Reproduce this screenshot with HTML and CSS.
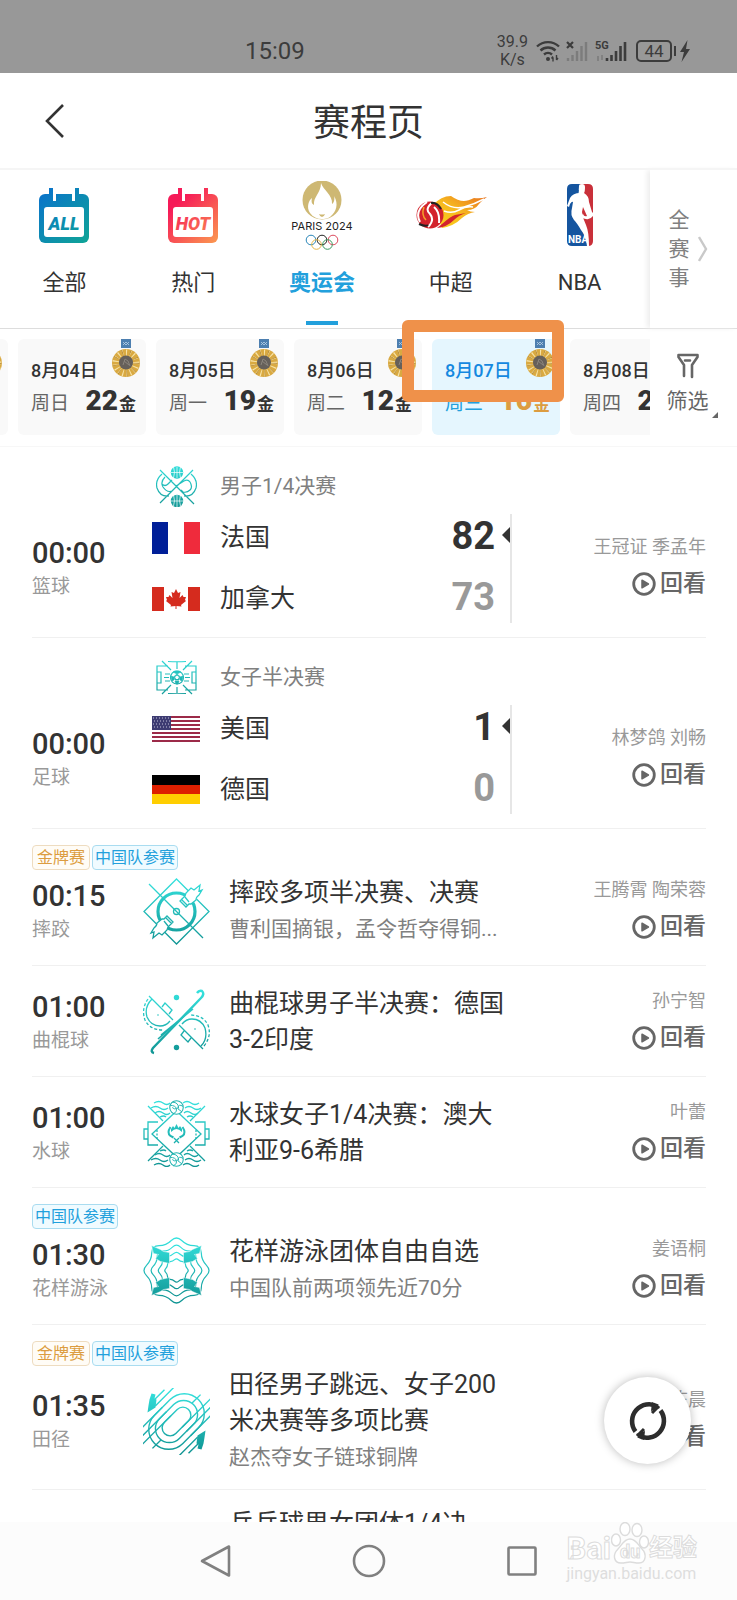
FILE: index.html
```html
<!DOCTYPE html>
<html lang="zh-CN">
<head>
<meta charset="utf-8">
<meta name="viewport" content="width=device-width, initial-scale=1">
<title>赛程页</title>
<link rel="stylesheet" href="styles.css">
</head>
<body>
<svg class="defs" aria-hidden="true">
  <defs>
    <linearGradient id="teal" gradientUnits="userSpaceOnUse" x1="0" y1="0" x2="0" y2="67"><stop offset="0" stop-color="#35e3df"/><stop offset="1" stop-color="#0f9392"/></linearGradient>
    <linearGradient id="teal-c" gradientUnits="userSpaceOnUse" x1="0" y1="-33" x2="0" y2="33"><stop offset="0" stop-color="#35e3df"/><stop offset="1" stop-color="#0f9392"/></linearGradient>
    <linearGradient id="teal-r" gradientUnits="userSpaceOnUse" x1="23" y1="-23" x2="-23" y2="23"><stop offset="0" stop-color="#35e3df"/><stop offset="1" stop-color="#0f9392"/></linearGradient>
    <linearGradient id="teal-s" gradientUnits="userSpaceOnUse" x1="0" y1="0" x2="0" y2="41"><stop offset="0" stop-color="#2fdedb"/><stop offset="1" stop-color="#159896"/></linearGradient>
    <linearGradient id="all" gradientUnits="userSpaceOnUse" x1="1" y1="10" x2="51" y2="62"><stop offset="0" stop-color="#0a72cc"/><stop offset="1" stop-color="#0fa596"/></linearGradient>
    <linearGradient id="hot" gradientUnits="userSpaceOnUse" x1="1" y1="10" x2="51" y2="62"><stop offset="0.2" stop-color="#f61a58"/><stop offset="1" stop-color="#fb9a50"/></linearGradient>
    <linearGradient id="fire" x1="0" y1="1" x2="1" y2="0"><stop offset="0" stop-color="#fbd31c"/><stop offset="0.5" stop-color="#f6b81f"/><stop offset="1" stop-color="#e8701f"/></linearGradient>
    <symbol id="medal" viewBox="0 0 28 38">
      <path d="M9 0h10v9H9z" fill="#4d7fb0"/><path d="M11 3l3 3 3-3M11 6l3-3 3 3" stroke="#b9d0e6" fill="none" stroke-width=".8"/>
      <circle cx="14" cy="24" r="14" fill="#d9a941"/>
      <circle cx="14" cy="24" r="10" fill="none" stroke="#f7e3a8" stroke-width="7" stroke-dasharray="1 2.6"/>
      <circle cx="14" cy="24" r="10" fill="none" stroke="#a97a25" stroke-width="7" stroke-dasharray=".6 6.6"/>
      <circle cx="14" cy="23.500" r="7" fill="#66605a"/><path d="M11 26l2-6 3 2 2 5M12 22l5 4" stroke="#8b857d" fill="none"/>
    </symbol>
    <symbol id="play" viewBox="0 0 24 24">
      <circle cx="12" cy="12" r="10.300" fill="none" stroke="#666" stroke-width="2.800"/><path d="M10 8.200l6.400 3.800-6.400 3.800z" fill="#666" stroke="#666" stroke-width="1.500" stroke-linejoin="round"/>
    </symbol>
    <symbol id="ball" viewBox="0 0 14 14">
      <circle cx="7" cy="7" r="6.300" fill="#fff" stroke="#22b5b2" stroke-width="1"/>
      <path d="M1 5q5 0 6 3t-3 5M3 2q6 0 6 6M13 6q-4-3-5 2M8 8l4 3M7 8q-2 1-4-1" fill="none" stroke="#22b5b2" stroke-width=".9"/>
    </symbol>
  </defs>
</svg>
<div class="screen">
  <div class="status">
    <span class="clock">15:09</span>
    <div class="status-right">
      <span class="speed">39.9<br>K/s</span>
      <svg width="92" height="24" viewBox="0 0 92 24" fill="none" stroke="#3c3c3c">
        <path d="M1 7.500a16 16 0 0 1 22 0M4.500 11.500a11 11 0 0 1 15 0M8 15.500a6 6 0 0 1 8 0" stroke-width="2.400"/>
        <circle cx="12" cy="20" r="2" fill="#3c3c3c" stroke="none"/>
        <path d="M17 18.500v4M20.500 16v5M15.500 19.500l1.500-2M22 19l-1.500 2" stroke-width="1.400"/>
        <path d="M31 3l6 6M37 3l-6 6" stroke-width="2.200"/>
        <path d="M32 22v-3M36.500 22v-6M41 22v-10M45.500 22V7M50 22V3" stroke="#7c7c7c" stroke-width="2.400"/>
        <path d="M62 17v5M66 16v5" stroke="#7c7c7c" stroke-width="1.600"/>
        <path d="M71 22v-3M75.500 22v-6M80 22v-10M84.500 22V7M89 22V3" stroke-width="2.600"/>
        <text x="59" y="10" class="net">5G</text>
      </svg>
      <span class="battery">44</span>
      <svg width="10" height="22" viewBox="0 0 10 22"><path d="M7.500 0L0 12h4L1.500 22 10 9H6z" fill="#3c3c3c"/></svg>
    </div>
  </div>

  <header class="bar">
    <button class="back" aria-label="返回"><svg width="20" height="34" viewBox="0 0 20 34"><path d="M18 1L2 17l16 16" fill="none" stroke="#333" stroke-width="2.600"/></svg></button>
    <h1>赛程页</h1>
  </header>

  <nav class="tabs">
    <div class="tab-list">
      <a class="tab" href="#all">
        <svg width="52" height="70" viewBox="0 0 52 70"><rect x="1" y="13" width="50" height="49" rx="6" fill="url(#all)"/><path d="M15 12h3v8h-3zM34 12h3v8h-3z" fill="#fff"/><path d="M11 7h4v12h-4zM37 7h4v12h-4z" fill="url(#all)"/><rect x="6" y="26" width="40" height="30" rx="3" fill="#fff"/><text x="26" y="49" class="cal-text" fill="url(#all)">ALL</text></svg>
        <span>全部</span>
      </a>
      <a class="tab" href="#hot">
        <svg width="52" height="70" viewBox="0 0 52 70"><rect x="1" y="13" width="50" height="49" rx="6" fill="url(#hot)"/><path d="M15 12h3v8h-3zM34 12h3v8h-3z" fill="#fff"/><path d="M11 7h4v12h-4zM37 7h4v12h-4z" fill="url(#hot)"/><rect x="6" y="26" width="40" height="30" rx="3" fill="#fff"/><text x="26" y="49" class="cal-text" fill="url(#hot)">HOT</text></svg>
        <span>热门</span>
      </a>
      <a class="tab active" href="#olympics">
        <svg width="64" height="70" viewBox="0 0 64 70">
          <circle cx="32" cy="19" r="19.500" fill="#ceb873"/>
          <path d="M31 2c2 7 12 12 11 21 2-1 3-5 2-8 5 8 2 16-3 20-2 2-4 3-9 3s-9-2-12-6c-4-6-1-13 2-15-1 4 0 6 2 7-1-8 7-12 7-22z" fill="#fff"/>
          <path d="M29 33q3 1 6 0-1 3-3 3t-3-3z" fill="#ceb873"/>
          <text x="32" y="49" class="paris">PARIS 2024</text>
          <g fill="none" stroke-width="1"><circle cx="21" cy="59" r="4.800" stroke="#2a86b8"/><circle cx="32" cy="59" r="4.800" stroke="#222"/><circle cx="43" cy="59" r="4.800" stroke="#dc4a5e"/><circle cx="26.500" cy="63.500" r="4.800" stroke="#e6b648"/><circle cx="37.500" cy="63.500" r="4.800" stroke="#3a9a5e"/></g>
        </svg>
        <span>奥运会</span>
      </a>
      <a class="tab" href="#csl">
        <svg width="72" height="70" viewBox="0 0 72 70">
          <path d="M18 24q8-9 18-9 7 5 13 5 4 0 10-3 6 1 13-1-5 3-8 7-4 6-12 6 3 2 8 2-7 1-13 6-8 8-20 10z" fill="url(#fire)"/>
          <path d="M28 21q10 8 21 5t20-8M29 30q8 3 15-1t14-3" fill="none" stroke="#fff" stroke-width="1.500"/>
          <path d="M27 43q9-8 13-9l11-2q-7 2-12 7-7 7-17 8z" fill="#d3232c"/>
          <ellipse cx="15" cy="34" rx="13.500" ry="13.500" fill="#d3232c"/>
          <path d="M12 21Q-1 30 5 41M18 21q-9 7-3 12 5 6-2 13M19 26q6 5 5 16" fill="none" stroke="#fff" stroke-width="2"/>
          <path d="M16 22q6-1 10 6M4 43q7 3 9 1" fill="none" stroke="#222" stroke-width="2"/>
          <path d="M9 26q-3 8 2 13" fill="none" stroke="#f4a12a" stroke-width="1.500"/>
        </svg>
        <span>中超</span>
      </a>
      <a class="tab" href="#nba">
        <svg width="28" height="70" viewBox="0 0 28 70">
          <path d="M14 3h8q5 0 5 5v52q0 5-5 5h-8z" fill="#c9303a"/><path d="M14 3H6Q1 3 1 8v52q0 5 5 5h17L9 34z" fill="#15559f"/>
          <path d="M13 5q0-2 3-2t3 3q0 5-1 6 5 3 5 9l3 10q2 1 1 4-3 4-7 3-3 0-4-3l1-2q1 3 4 2l-4-9-1 5q1 7 4 13 3 7 3 21h-2q-1-10-6-16-4-7-7-10-4-5-2-12l1-6q-1-1-3 2L3 26l-2-1 3-8q3-5 10-5-2-3-1-7z" fill="#fff"/>
          <text x="2" y="62" class="nba-text">NBA</text>
        </svg>
        <span>NBA</span>
      </a>
    </div>
    <button class="all-events"><span>全赛事</span><svg width="10" height="26" viewBox="0 0 10 26"><path d="M1 1l7 12-7 12" fill="none" stroke="#c9c9c9" stroke-width="2.400"/></svg></button>
  </nav>

  <div class="dates">
    <div class="date-strip">
      <button class="date"><b>8月03日</b><span class="line"><i>周六</i><span class="gold"><strong>15</strong>金</span></span><svg class="medal"><use href="#medal"/></svg></button>
      <button class="date"><b>8月04日</b><span class="line"><i>周日</i><span class="gold"><strong>22</strong>金</span></span><svg class="medal"><use href="#medal"/></svg></button>
      <button class="date"><b>8月05日</b><span class="line"><i>周一</i><span class="gold"><strong>19</strong>金</span></span><svg class="medal"><use href="#medal"/></svg></button>
      <button class="date"><b>8月06日</b><span class="line"><i>周二</i><span class="gold"><strong>12</strong>金</span></span><svg class="medal"><use href="#medal"/></svg></button>
      <button class="date selected"><b>8月07日</b><span class="line"><i>周三</i><span class="gold"><strong>16</strong>金</span></span><svg class="medal"><use href="#medal"/></svg></button>
      <button class="date"><b>8月08日</b><span class="line"><i>周四</i><span class="gold"><strong>21</strong>金</span></span></button>
    </div>
    <button class="filter">
      <svg width="22" height="26" viewBox="0 0 22 26" fill="none" stroke="#666" stroke-width="2.600" stroke-linecap="round" stroke-linejoin="round"><path d="M7 23V12L1.500 4V2h19v2L15 12v12M8 7.500h5"/></svg>
      <span>筛选</span>
    </button>
    <div class="callout"></div>
  </div>

  <main class="schedule">
    <section class="event match">
      <div class="stage"><svg width="41" height="41" viewBox="0 0 41 41" fill="none" stroke="url(#teal-s)" stroke-width="1.200">
        <path d="M4 4l34 34M37 4L4 37M6 8Q-1 14 1 22q3 9 12 8M16 14l-4 4q-3 3-6 0M35 8q7 6 5 14-3 9-12 8M9 11q-5 5-2 10 4 6 9 4l5-5M20 20l8-5q4-2 6 1 3 5 0 8t-7 2l-2-2"/>
        <g fill="url(#teal-s)" stroke="none"><circle cx="21" cy="6.500" r="6.200"/><circle cx="21" cy="35" r="6.200"/></g>
        <path d="M15 6.500h12M21 1v11M17.500 1q2 5 0 11M24.500 1q-2 5 0 11M15 35h12M21 29v12M17.500 29q2 6 0 11M24.500 29q-2 6 0 11" stroke="#fff" stroke-width=".7"/>
      </svg><span>男子1/4决赛</span></div>
      <div class="body">
        <div class="when"><time>00:00</time><span>篮球</span></div>
        <div class="teams">
          <div class="team"><svg width="48" height="32" viewBox="0 0 48 32"><path d="M0 0h16v32H0z" fill="#001f98"/><path d="M16 0h16v32H16z" fill="#fff"/><path d="M32 0h16v32H32z" fill="#ef2b3c"/></svg><span>法国</span><strong class="win">82</strong></div>
          <div class="team"><svg width="48" height="24" viewBox="0 0 48 24"><path d="M0 0h48v24H0z" fill="#fff"/><path d="M0 0h12v24H0zM36 0h12v24H36z" fill="#d52b1e"/><path d="M24 2l2 4 2.500-1-1 6 3-3 1 2 2.500 0-1 3 1 1-5 4 .5 1.500-5-.5V22h-1v-3l-5 .500.500-1.500-5-4 1-1-1-3h2.500l1-2 3 3-1-6L22 6z" fill="#d52b1e"/></svg><span>加拿大</span><strong>73</strong></div>
        </div>
        <div class="watch"><span>王冠证 季孟年</span><a href="#replay"><svg><use href="#play"/></svg>回看</a></div>
      </div>
    </section>

    <section class="event match">
      <div class="stage"><svg width="41" height="41" viewBox="0 0 41 41" fill="none" stroke="url(#teal-s)" stroke-width="1.200">
        <path d="M12 9H1v24h11M29 9h11v24H29M1 15h4v11H1M40 15h-4v11h4M12 4.500q9 .5 18 0M12 36.500q9-.5 18 0M6 4l9 9M36 4l-9 9M6 37l9-9M36 37l-9-9M21 5v7M21 30v6M9 17h5M8 20.500h5M9 24h5M28 17h5M29 20.500h5M28 24h5"/>
        <circle cx="21" cy="20.500" r="6.500"/><path d="M21 17l3 2.500-1 3.500h-4l-1-3.500zM17 15l2-1h4l2 1-4 2zM15 19l1 5 2-1 0-3zM27 19l-1 5-2-1 0-3zM19 24h4l-1 3h-2z" fill="url(#teal-s)" stroke-width=".6"/><path d="M21 18.500l2 1.500-1 2h-2l-1-2z" fill="#fff" stroke="none"/>
      </svg><span>女子半决赛</span></div>
      <div class="body">
        <div class="when"><time>00:00</time><span>足球</span></div>
        <div class="teams">
          <div class="team"><svg width="48" height="26" viewBox="0 0 48 26"><path d="M0 0h48v26H0z" fill="#fff"/><path d="M0 1h48M0 5h48M0 9h48M0 13h48M0 17h48M0 21h48M0 25h48" stroke="#9c2a48" stroke-width="2"/><path d="M0 0h19v14H0z" fill="#3d3b72"/><path d="M1 2h18M2 5h17M1 8h18M2 11h17" stroke="#c5c4da" stroke-width="1" stroke-dasharray="1 2"/></svg><span>美国</span><strong class="win">1</strong></div>
          <div class="team"><svg width="48" height="29" viewBox="0 0 48 29"><path d="M0 0h48v10H0z"/><path d="M0 10h48v10H0z" fill="#dd1f00"/><path d="M0 19h48v10H0z" fill="#ffce00"/></svg><span>德国</span><strong>0</strong></div>
        </div>
        <div class="watch"><span>林梦鸽 刘畅</span><a href="#replay"><svg><use href="#play"/></svg>回看</a></div>
      </div>
    </section>

    <section class="event">
      <div class="badges"><span class="badge final">金牌赛</span><span class="badge china">中国队参赛</span></div>
      <div class="body">
        <div class="when"><time>00:15</time><span>摔跤</span></div>
        <svg class="sport" viewBox="0 0 67 67" fill="none" stroke="url(#teal)" stroke-width="1.300">
          <path d="M33.500 1L66 33.500 33.500 66 1 33.500z"/>
          <circle cx="33.500" cy="33.500" r="18.500" stroke-width="3.200"/><circle cx="33.500" cy="33.500" r="3"/><path d="M6 6l54 54"/>
          <path fill="#fff" d="M37 23l6 6 3-3 2 0 5-4q0-3 3-5l3-5-3 1 1-6-6 5-3-2-5 5-1 3zM38 21l6 6M42 19l4 5"/>
          <path fill="#fff" d="M30 44l-6-6-3 3-2 0-5 4q0 3-3 5l-3 5 3-1-1 6 6-5 3 2 5-5 1-3zM29 46l-6-6M25 48l-4-5"/>
        </svg>
        <div class="info"><h2>摔跤多项半决赛、决赛</h2><p>曹利国摘银，孟令哲夺得铜...</p></div>
        <div class="watch"><span>王腾霄 陶荣蓉</span><a href="#replay"><svg><use href="#play"/></svg>回看</a></div>
      </div>
    </section>

    <section class="event">
      <div class="body">
        <div class="when"><time>01:00</time><span>曲棍球</span></div>
        <svg class="sport" viewBox="0 0 67 67" fill="none" stroke="url(#teal)" stroke-width="1.300">
          <path d="M6 7l24 24M36 36l24 24M19 18l3-4 7 7-3 4M48 49l-3 4-7-7 3-4"/>
          <path d="M9 10Q1 18 4 28q4 9 13 9 6 0 10-5M58 57q7-7 4-18-4-9-13-9-6 0-10 5"/>
          <path d="M5 10Q-2 20 2 31q5 10 18 10M61 57q8-10 4-21-5-10-18-10" stroke-dasharray="3 2"/>
          <path d="M54 4q2-3 5-2 3 3-1 7L10 59q-3 4 1 5" stroke-width="2.400"/><path d="M49 20L15 50M18 46l32-26" stroke-width="1.600"/>
          <g fill="url(#teal)" stroke="none"><circle cx="33.500" cy="8.500" r="2.700"/><circle cx="33.500" cy="58.500" r="2.700"/><circle cx="15" cy="26" r=".8"/><circle cx="52" cy="40" r=".8"/></g>
        </svg>
        <div class="info"><h2>曲棍球男子半决赛：德国3-2印度</h2></div>
        <div class="watch"><span>孙宁智</span><a href="#replay"><svg><use href="#play"/></svg>回看</a></div>
      </div>
    </section>

    <section class="event">
      <div class="body">
        <div class="when"><time>01:00</time><span>水球</span></div>
        <svg class="sport" viewBox="0 0 67 67" fill="none" stroke="url(#teal)" stroke-width="1.300">
          <path d="M33.500 11L58 34 33.500 57 9 34zM5 6l15 15M62 6L47 21M5 61l15-15M62 61L47 46"/>
          <path d="M15 22H5v23h10M5 29H1v10h4M52 22h10v23H52M62 29h4v10h-4"/>
          <path d="M14 30v9M53 30v9" stroke-dasharray="2 1.500"/>
          <path d="M11 3q5-3 9 0t7 0M40 3q4-3 8 0t8 0M8 8q5-3 9 0t8 0M42 8q4-3 8 0t8 0M12 13q4-3 8 0t7 0M41 13q3-3 7 0t7 0M17 17q4-2 6 0M44 17q3-2 6 0"/>
          <path d="M11 65q5-3 9 0t7 0M40 65q4-3 8 0t8 0M8 60q5-3 9 0t8 0M42 60q4-3 8 0t8 0M12 55q4-3 8 0t7 0M41 55q3-3 7 0t7 0M17 51q4-2 6 0M44 51q3-2 6 0"/>
          <use href="#ball" x="26" y="0" width="15" height="15"/><use href="#ball" x="26" y="52" width="15" height="15"/>
          <path d="M28 29l2-3 1.500 2 2-4 2 4 1.500-2 2 3v3q-3-3-5.500-3T28 32z" fill="url(#teal)" stroke="none"/><path d="M27.500 27q-4 6 0 9l3 1.500M39.500 27q4 6 0 9l-3 1.500" stroke-width="2"/><path d="M31 38l5 5M36 38l-5 5"/>
        </svg>
        <div class="info"><h2>水球女子1/4决赛：澳大利亚9-6希腊</h2></div>
        <div class="watch"><span>叶蕾</span><a href="#replay"><svg><use href="#play"/></svg>回看</a></div>
      </div>
    </section>

    <section class="event">
      <div class="badges"><span class="badge china">中国队参赛</span></div>
      <div class="body">
        <div class="when"><time>01:30</time><span>花样游泳</span></div>
        <svg class="sport" viewBox="-33.5 -33.5 67 67" fill="none" stroke="url(#teal-c)" stroke-width="1.200">
          <defs><path id="wave" vector-effect="non-scaling-stroke" d="M30-5.200Q35 0 30 5.200 24.900 10.300 24.800 17.500 24.700 24.700 17.500 24.800 10.300 24.900 5.200 30 0 35-5.200 30-10.300 24.900-17.500 24.800-24.700 24.700-24.800 17.500-24.900 10.300-30 5.200-35 0-30-5.200-24.900-10.300-24.800-17.500-24.700-24.700-17.500-24.800-10.300-24.900-5.200-30 0-35 5.200-30 10.300-24.900 17.500-24.800 24.700-24.700 24.800-17.500 24.900-10.300 30-5.200z"/></defs>
          <use href="#wave"/><use href="#wave" transform="scale(.78)"/><use href="#wave" transform="scale(.56)"/><use href="#wave" transform="scale(.36)"/>
          <g fill="url(#teal-c)" stroke="#fff" stroke-width=".5">
            <path d="M-7-7l0-11-6-1-3-2-9-4 2 8 5 1-3 4 5 3z"/>
            <path d="M7-7l0-11 6-1 3-2 9-4-2 8-5 1 3 4-5 3z"/>
            <path d="M-7 7l0 11-6 1-3 2-9 4 2-8 5-1-3-4 5-3z"/>
            <path d="M7 7l0 11 6 1 3 2 9 4-2-8-5-1 3-4-5-3z"/>
          </g>
        </svg>
        <div class="info"><h2>花样游泳团体自由自选</h2><p>中国队前两项领先近70分</p></div>
        <div class="watch"><span>姜语桐</span><a href="#replay"><svg><use href="#play"/></svg>回看</a></div>
      </div>
    </section>

    <section class="event">
      <div class="badges"><span class="badge final">金牌赛</span><span class="badge china">中国队参赛</span></div>
      <div class="body">
        <div class="when"><time>01:35</time><span>田径</span></div>
        <svg class="sport" viewBox="-33.5 -33.5 67 67" fill="none" stroke="url(#teal-c)" stroke-width="1.400">
          <g transform="rotate(-45)" stroke="url(#teal-r)">
            <rect x="-17" y="-8" width="34" height="16" rx="8"/>
            <rect x="-24" y="-14" width="48" height="28" rx="14"/>
            <rect x="-31" y="-20" width="62" height="40" rx="20"/>
            <path d="M-40-8H0M-36-14H0M-30-20H0M40 8H0M36 14H0M30 20H0M-36 2h12M36-2H24M-4-26h26M0-31h14M4 26h-26M0 31h-14"/>
          </g>
          <path d="M-25-28l4 1-1 4 2 1-1 8-8 5 1-7 1-6zM25 28l-4-1 1-4-2-1 1-8 8-5-1 7-1 6z" fill="url(#teal-c)" stroke="none"/>
        </svg>
        <div class="info"><h2>田径男子跳远、女子200米决赛等多项比赛</h2><p>赵杰夺女子链球铜牌</p></div>
        <div class="watch"><span>陈晨</span><a href="#replay"><svg><use href="#play"/></svg>回看</a></div>
      </div>
    </section>

    <section class="event">
      <div class="body">
        <div class="when"></div>
        <div class="sport"></div>
        <div class="info"><h2>乒乓球男女团体1/4决赛：</h2><p></p></div>
        <div class="watch"></div>
      </div>
    </section>
  </main>

  <button class="refresh" aria-label="刷新"><svg width="42" height="42" viewBox="0 0 42 42"><path d="M8.500 31.500A17 17 0 0 1 30.500 6.500M33.500 10.500A17 17 0 0 1 11.500 35.500" fill="none" stroke="#2d2d2d" stroke-width="4.600"/><path d="M25 2l8 6-9 3M17 40l-8-6 9-3" fill="#2d2d2d"/><path d="M32 6l-7 7M10 36l7-7" stroke="#2d2d2d" stroke-width="3"/></svg></button>

  <footer class="sysnav">
    <button aria-label="后退"><svg width="34" height="34" viewBox="0 0 34 34"><path d="M30 2.500v29L3 17z" fill="none" stroke="#808080" stroke-width="2.600" stroke-linejoin="round"/></svg></button>
    <button aria-label="主页"><svg width="34" height="34" viewBox="0 0 34 34"><circle cx="17" cy="17" r="15" fill="none" stroke="#808080" stroke-width="2.600"/></svg></button>
    <button aria-label="最近任务"><svg width="34" height="34" viewBox="0 0 34 34"><rect x="3.500" y="3.500" width="27" height="27" rx="1" fill="none" stroke="#808080" stroke-width="2.600"/></svg></button>
  </footer>

  <div class="watermark">
    <div class="mark-top"><span class="mark-bai">Bai</span><span class="paw"><svg width="38" height="42" viewBox="0 0 38 42" fill="#fff" stroke="#dcdcdc" stroke-width="1.400"><ellipse cx="5" cy="18" rx="4.500" ry="6"/><ellipse cx="14" cy="7" rx="5" ry="6.500"/><ellipse cx="26" cy="8" rx="5" ry="6.500"/><ellipse cx="33" cy="20" rx="4.500" ry="6"/><path d="M19 17c6 0 8 6 12 10 5 5 4 14-3 14-4 0-6-1-9-1s-5 1-9 1c-7 0-9-8-3-14 4-4 6-10 12-10z"/></svg><b>du</b></span><span class="mark-exp">经验</span></div>
    <div class="mark-url">jingyan.baidu.com</div>
  </div>
</div>
</body>
</html>
```
FILE: styles.css
```css
* { box-sizing: border-box; }
body {
  margin: 0;
  background: #fff;
  color: #333;
  font-family: Roboto, "Noto Sans CJK SC", sans-serif;
}
button { border: 0; background: none; padding: 0; color: inherit; font: inherit; }
a { color: inherit; text-decoration: none; }
h1, h2, p { margin: 0; font-weight: 400; }
svg { display: block; flex: none; }
.defs { position: absolute; width: 0; height: 0; }

.screen {
  position: relative;
  display: flex;
  flex-direction: column;
  height: 100vh;
  overflow: hidden;
}

/* status bar */
.status {
  flex: none;
  display: flex;
  align-items: center;
  justify-content: space-between;
  height: 73px;
  padding: 28px 47px 0 245px;
  background: #989898;
  color: #3c3c3c;
}
.clock { font-size: 24px; }
.status-right { display: flex; align-items: center; gap: 8px; }
.speed { font-size: 16px; line-height: 18px; text-align: center; }
.net { font-size: 11px; font-weight: 700; fill: #3c3c3c; stroke: none; }
.battery {
  position: relative;
  width: 36px;
  height: 22px;
  border: 2px solid #3c3c3c;
  border-radius: 5px;
  font-size: 17px;
  line-height: 18px;
  text-align: center;
}
.battery::after {
  content: "";
  position: absolute;
  top: 4px;
  right: -6px;
  width: 2px;
  height: 10px;
  background: #3c3c3c;
}

/* title bar */
.bar {
  flex: none;
  position: relative;
  display: flex;
  align-items: center;
  justify-content: center;
  height: 97px;
  padding-top: 6px;
  border-bottom: 2px solid #f5f5f5;
}
.bar h1 { font-size: 37px; line-height: 48px; }
.back { position: absolute; top: 31px; left: 45px; }

/* competition tabs */
.tabs { flex: none; display: flex; height: 159px; border-bottom: 1px solid #ddd; }
.tab-list { flex: 1; display: flex; padding-right: 6px; }
.tab {
  flex: 1 1 0;
  position: relative;
  display: flex;
  flex-direction: column;
  align-items: center;
  gap: 16px;
  padding-top: 11px;
  font-size: 22px;
  line-height: 32px;
}
.tab.active { color: #22a0dc; font-weight: 700; }
.tab.active::after {
  content: "";
  position: absolute;
  bottom: 3px;
  width: 32px;
  height: 4px;
  background: #22a0dc;
}
.cal-text { font: italic 900 18px Roboto, sans-serif; text-anchor: middle; }
.paris { font: 400 11px Inter, sans-serif; text-anchor: middle; fill: #222; }
.nba-text { font: 700 10px Roboto, sans-serif; fill: #fff; }
.all-events {
  flex: none;
  display: flex;
  align-items: center;
  gap: 8px;
  width: 87px;
  padding: 0 0 0 18px;
  box-shadow: -3px 0 5px #eee;
  color: #808080;
  font-size: 21px;
  line-height: 29px;
}
.all-events span { width: 22px; }

/* date picker */
.dates { flex: none; position: relative; display: flex; height: 118px; border-bottom: 1px solid #f7f7f7; }
.date-strip { flex: 1; display: flex; gap: 10px; min-width: 0; padding-top: 10px; overflow: hidden; }
.date {
  flex: none;
  display: flex;
  flex-direction: column;
  justify-content: flex-start;
  position: relative;
  width: 128px;
  height: 96px;
  padding: 19px 10px 0 13px;
  border-radius: 6px;
  background: #f9f9f9;
  text-align: left;
}
.date:first-child { margin-left: -120px; }
.date b { font-size: 18px; line-height: 26px; font-weight: 500; }
.line { display: flex; justify-content: space-between; align-items: baseline; line-height: 34px; }
.date i { color: #666; font-size: 19px; font-style: normal; }
.gold { font-size: 17px; font-weight: 700; }
.gold strong { margin-right: 1px; font-size: 28px; }
.date.selected { background: #e5f6fe; color: #1488e0; }
.selected i { color: #22a0dc; }
.selected .gold { color: #dc9c40; }
.medal { position: absolute; top: 0; right: 6px; width: 28px; height: 38px; }
.filter {
  flex: none;
  position: relative;
  display: flex;
  flex-direction: column;
  align-items: center;
  gap: 6px;
  width: 87px;
  padding: 24px 12px 0 0;
  color: #666;
  font-size: 21px;
  line-height: 32px;
}
.filter::after {
  content: "";
  position: absolute;
  right: 19px;
  bottom: 28px;
  border: 3px solid transparent;
  border-right-color: #666;
  border-bottom-color: #666;
}
.callout {
  position: absolute;
  top: -9px;
  right: 173px;
  width: 162px;
  height: 82px;
  border: 12px solid #ef914a;
  border-radius: 6px;
}

/* schedule */
.schedule { flex: 1; min-height: 0; overflow: hidden; padding: 0 31px 0 32px; }
.event { padding: 16px 0 14px; border-bottom: 1px solid #f0f0f0; }
.body { display: flex; align-items: center; min-height: 80px; }
.when { flex: none; width: 111px; padding-top: 4px; }
.when time { display: block; font-size: 29px; line-height: 34px; font-weight: 500; }
.when span { display: block; color: #999; font-size: 19px; line-height: 34px; white-space: nowrap; }
.sport { flex: none; width: 67px; height: 67px; }
.info { flex: 1; padding: 0 0 0 19px; }
.info h2 { font-size: 25px; line-height: 36px; }
.info p { min-height: 36px; color: #808080; font-size: 21px; line-height: 36px; }
.watch {
  flex: none;
  display: flex;
  flex-direction: column;
  align-items: flex-end;
  width: 194px;
  padding-bottom: 6px;
}
.watch span { color: #999; font-size: 18px; line-height: 37px; }
.watch a {
  display: flex;
  align-items: center;
  gap: 4px;
  color: #666;
  font-size: 23px;
  line-height: 37px;
  font-weight: 500;
}
.watch svg { width: 24px; height: 24px; }

.badges { display: flex; gap: 2px; height: 26px; padding-bottom: 1px; }
.badge {
  padding: 0 2px;
  border: 1px solid;
  border-radius: 4px;
  font-size: 16px;
  line-height: 23px;
}
.final { padding: 0 4px; border-color: #eedcc0; background: #fffcf6; color: #dc9c40; }
.china { border-color: #a9dcf0; background: #f0fbff; color: #22a0dc; }

.match { padding: 18px 0 8px; }
.stage { display: flex; align-items: center; gap: 23px; height: 42px; padding-left: 124px; }
.stage span { color: #808080; font-size: 21px; line-height: 30px; }
.teams {
  flex: 1;
  display: flex;
  flex-direction: column;
  justify-content: space-between;
  height: 109px;
  border-right: 2px solid #e6e6e6;
}
.match .body { min-height: 122px; }
.team { position: relative; display: flex; align-items: center; height: 48px; padding: 0 15px 0 9px; }
.team svg { width: 48px; }
.team span { flex: 1; padding-left: 20px; font-size: 25px; line-height: 36px; }
.team strong { padding-bottom: 4px; color: #999; font-size: 38px; line-height: 44px; }
.team .win { color: #333; }
.win::after {
  content: "";
  position: absolute;
  top: 13px;
  right: 0;
  border: 8px solid transparent;
  border-left-width: 0;
  border-right-color: #333;
}

/* floating refresh button */
.refresh {
  position: absolute;
  right: 46px;
  bottom: 136px;
  display: flex;
  align-items: center;
  justify-content: center;
  width: 87px;
  height: 87px;
  border-radius: 50%;
  background: #fff;
  box-shadow: 0 0 10px #0004;
}

/* system navigation */
.sysnav {
  flex: none;
  display: flex;
  align-items: center;
  justify-content: center;
  gap: 119px;
  height: 78px;
  background: #fcfcfc;
}

.watermark { position: absolute; right: 40px; bottom: 16px; color: #fff; -webkit-text-stroke: 1px #dcdcdc; }
.mark-top { display: flex; align-items: flex-end; height: 44px; }
.mark-bai { font-size: 31px; line-height: 31px; font-weight: 700; }
.paw { position: relative; }
.paw b { position: absolute; left: 9px; bottom: 2px; font-size: 18px; line-height: 20px; }
.mark-exp { font-size: 24px; line-height: 31px; font-weight: 700; }
.mark-url { font-size: 16px; line-height: 20px; -webkit-text-stroke: 0; color: #dedede; }
```
